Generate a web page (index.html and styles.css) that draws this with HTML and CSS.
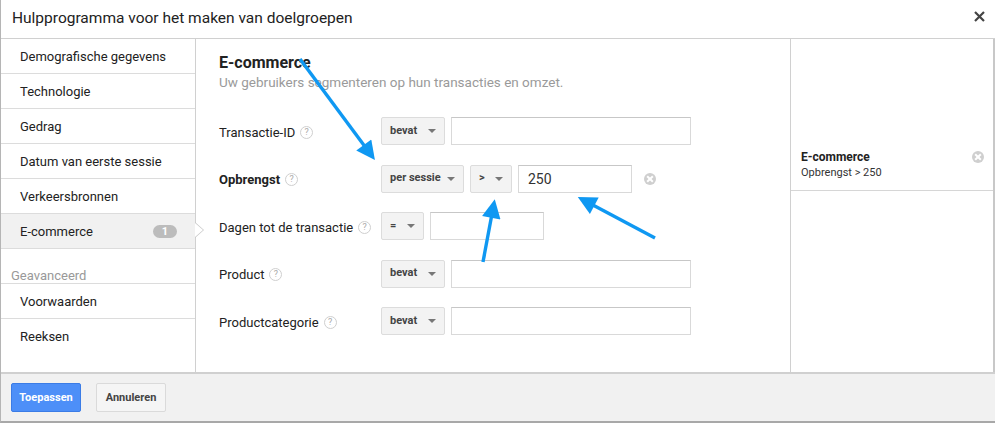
FILE: index.html
```html
<!DOCTYPE html>
<html lang="nl">
  <head>
    <meta charset="UTF-8" />
    <title>Hulpprogramma voor het maken van doelgroepen</title>
    <link rel="stylesheet" href="styles.css">
  </head>
  <body>
    <div class="dialog">
      <div class="header">
        <span class="title">Hulpprogramma voor het maken van doelgroepen</span>
        <svg class="close" width="11" height="11" viewBox="0 0 11 11">
          <path d="M1 1 L10 10 M10 1 L1 10" stroke="#444" stroke-width="2.2" />
        </svg>
      </div>

      <div class="body">
        <div class="nav">
          <div class="nav-item">Demografische gegevens</div>
          <div class="nav-item">Technologie</div>
          <div class="nav-item">Gedrag</div>
          <div class="nav-item">Datum van eerste sessie</div>
          <div class="nav-item">Verkeersbronnen</div>
          <div class="nav-item active">E-commerce <span class="badge">1</span></div>
          <div class="nav-group">Geavanceerd</div>
          <div class="nav-item">Voorwaarden</div>
          <div class="nav-item last">Reeksen</div>
        </div>

        <div class="main">
          <h2>E-commerce</h2>
          <p class="sub">Uw gebruikers segmenteren op hun transacties en omzet.</p>

          <div class="row">
            <div class="label">Transactie-ID <span class="help">?</span></div>
            <div class="select w64">bevat <span class="caret"></span></div>
            <div class="input w240"></div>
          </div>

          <div class="row">
            <div class="label"><b>Opbrengst</b> <span class="help">?</span></div>
            <div class="select w83">per sessie <span class="caret"></span></div>
            <div class="select w42">&gt; <span class="caret"></span></div>
            <div class="input w114 filled">250</div>
            <span class="clear"></span>
          </div>

          <div class="row">
            <div class="label">Dagen tot de transactie <span class="help">?</span></div>
            <div class="select w43">= <span class="caret"></span></div>
            <div class="input w114"></div>
          </div>

          <div class="row">
            <div class="label">Product <span class="help">?</span></div>
            <div class="select w64">bevat <span class="caret"></span></div>
            <div class="input w240"></div>
          </div>

          <div class="row">
            <div class="label">Productcategorie <span class="help">?</span></div>
            <div class="select w64">bevat <span class="caret"></span></div>
            <div class="input w240"></div>
          </div>
        </div>

        <div class="summary">
          <div class="summary-item">
            <div>
              <div class="summary-title">E-commerce</div>
              <div class="summary-text">Opbrengst &gt; 250</div>
            </div>
            <span class="clear"></span>
          </div>
        </div>
      </div>

      <div class="footer">
        <button class="btn primary">Toepassen</button>
        <button class="btn">Annuleren</button>
      </div>

      <!-- annotation arrows drawn over the screenshot -->
      <svg class="arrows" width="995" height="423" viewBox="0 0 995 423">
        <defs>
          <marker id="head" viewBox="0 0 10 10" refX="2" refY="5" markerWidth="6" markerHeight="5.5" orient="auto">
            <path d="M0 0 L10 5 L0 10 z" fill="#0f98f2" />
          </marker>
        </defs>
        <line x1="300" y1="59" x2="366" y2="148" stroke="#0f98f2" stroke-width="3.4" marker-end="url(#head)" />
        <line x1="483" y1="262" x2="492" y2="214" stroke="#0f98f2" stroke-width="3.4" marker-end="url(#head)" />
        <line x1="655" y1="238" x2="591" y2="204" stroke="#0f98f2" stroke-width="3.4" marker-end="url(#head)" />
      </svg>
    </div>
  </body>
</html>
```

FILE: styles.css
```css
* {
  box-sizing: border-box;
}
body {
  margin: 0;
  font-family: Roboto, "Liberation Sans", Arial, sans-serif;
  color: #222;
  background: #fff;
}
.dialog {
  position: relative;
  width: 995px;
  height: 423px;
  display: flex;
  flex-direction: column;
  border-left: 1px solid #b5b5b5;
  border-bottom: 2px solid #a8a8a8;
}
.header {
  height: 39px;
  flex-shrink: 0;
  display: flex;
  align-items: center;
  justify-content: space-between;
  padding: 0 10px 2px 11px;
  border-bottom: 1px solid #d0d0d0;
}
.title {
  font-size: 15.5px;
  color: #222;
}
.close {
  margin-top: -4px;
}
.body {
  flex: 1;
  display: flex;
  min-height: 0;
}
.nav {
  width: 195px;
  flex-shrink: 0;
  border-right: 1px solid #d0d0d0;
}
.nav-item {
  position: relative;
  height: 35px;
  display: flex;
  align-items: center;
  justify-content: space-between;
  padding: 0 18px 0 19px;
  font-size: 13px;
  border-bottom: 1px solid #dcdcdc;
}
.nav-item.last {
  border-bottom: none;
}
.nav-item.active {
  background: #f1f1f1;
}
.nav-item.active::before,
.nav-item.active::after {
  content: "";
  position: absolute;
  left: 100%;
  width: 0;
  height: 0;
  border-style: solid;
  border-color: transparent;
}
.nav-item.active::before {
  top: 8px;
  border-width: 8px 0 8px 9px;
  border-left-color: #c8c8c8;
}
.nav-item.active::after {
  top: 9px;
  border-width: 7px 0 7px 8px;
  border-left-color: #fff;
}
.badge {
  display: inline-block;
  width: 24px;
  height: 13px;
  line-height: 13px;
  border-radius: 7px;
  background: #bcbcbc;
  color: #fff;
  font-size: 11px;
  font-weight: bold;
  text-align: center;
}
.nav-group {
  height: 35px;
  padding: 19px 0 0 10px;
  font-size: 13px;
  color: #999;
  border-bottom: 1px solid #dcdcdc;
}
.main {
  flex: 1;
  padding: 14px 20px 0 23px;
}
h2 {
  margin: 0;
  font-size: 16px;
  font-weight: bold;
  color: #222;
}
.sub {
  margin: 2px 0 27px;
  font-size: 13.5px;
  color: #9a9a9a;
}
.row {
  display: flex;
  align-items: center;
  gap: 6px;
  height: 28px;
  margin-bottom: 19.5px;
}
.label {
  width: 156px;
  font-size: 13px;
  display: flex;
  align-items: center;
  gap: 5px;
  margin-top: 2px;
}
.help {
  display: inline-block;
  width: 13px;
  height: 13px;
  border: 1px solid #cfcfcf;
  border-radius: 50%;
  font-size: 9px;
  line-height: 11px;
  text-align: center;
  color: #aaa;
}
.select {
  height: 28px;
  display: flex;
  align-items: center;
  justify-content: space-between;
  padding: 0 8px 2px 8px;
  background: #f3f3f3;
  border: 1px solid #dcdcdc;
  border-radius: 2px;
  font-size: 11px;
  font-weight: bold;
  color: #444;
}
.caret {
  width: 0;
  height: 0;
  margin-top: 2px;
  border-left: 4px solid transparent;
  border-right: 4px solid transparent;
  border-top: 4px solid #777;
}
.w64 { width: 64px; }
.w83 { width: 83px; }
.w42 { width: 42px; }
.w43 { width: 43px; }
.input {
  height: 28px;
  background: #fff;
  border: 1px solid #d9d9d9;
  border-top-color: #c7c7c7;
  font-size: 13px;
  color: #333;
  padding: 5px 9px;
}
.w240 { width: 240px; }
.w114 { width: 114px; }
.filled {
  font-size: 14px;
}
.clear {
  position: relative;
  display: inline-block;
  width: 12px;
  height: 12px;
  border-radius: 50%;
  background: #cfcfcf;
  margin-left: 6px;
}
.clear::before,
.clear::after {
  content: "";
  position: absolute;
  left: 5px;
  top: 2px;
  width: 2px;
  height: 8px;
  background: #fff;
  transform: rotate(45deg);
}
.clear::after {
  transform: rotate(-45deg);
}
.summary {
  width: 205px;
  flex-shrink: 0;
  border-left: 1px solid #d0d0d0;
  border-right: 2px solid #c8c8c8;
}
.summary-item {
  display: flex;
  justify-content: space-between;
  align-items: flex-start;
  padding: 111px 9px 11px 10px;
  border-bottom: 1px solid #d6d6d6;
}
.summary-title {
  font-size: 12px;
  font-weight: bold;
  color: #222;
}
.summary-text {
  margin-top: 2px;
  font-size: 11px;
  color: #333;
}
.summary-item .clear {
  margin-top: 1px;
}
.footer {
  height: 49px;
  flex-shrink: 0;
  display: flex;
  align-items: center;
  gap: 15px;
  padding: 0 0 0 10px;
  background: #f1f1f1;
  border-top: 2px solid #d0d0d0;
}
.btn {
  height: 29px;
  width: 70px;
  padding: 0;
  font-family: inherit;
  font-size: 11px;
  font-weight: bold;
  color: #444;
  background: #f5f5f5;
  border: 1px solid #dadada;
  border-radius: 2px;
}
.btn.primary {
  color: #fff;
  background: #4d8ff8;
  border-color: #3b7ce6;
}
.arrows {
  position: absolute;
  left: -1px;
  top: 0;
  pointer-events: none;
}
```
